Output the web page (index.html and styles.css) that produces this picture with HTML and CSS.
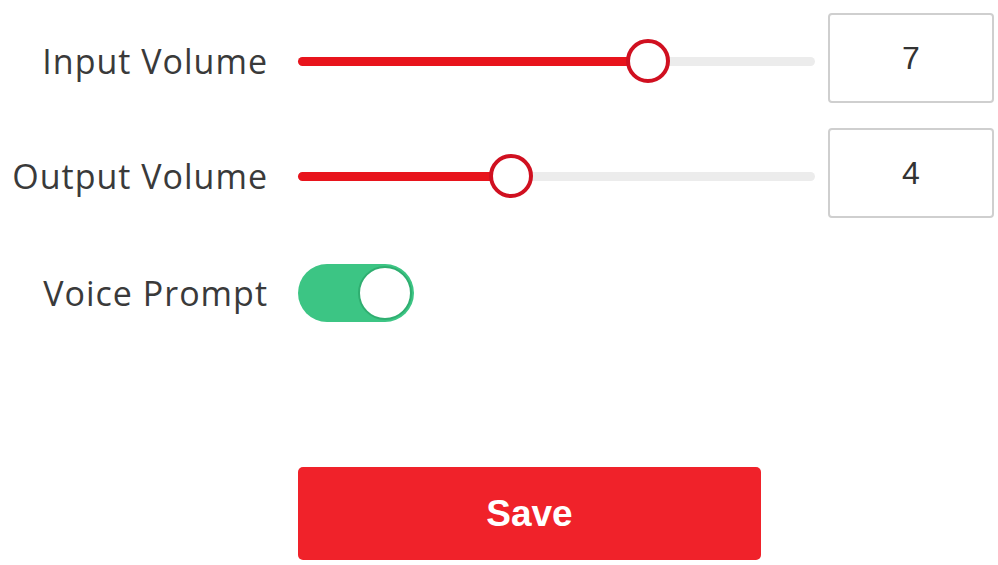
FILE: index.html
```html
<!DOCTYPE html>
<html lang="en">
<head>
  <meta charset="UTF-8" />
  <meta name="viewport" content="width=device-width, initial-scale=1.0"/>
  <title>Audio Settings</title>
  <link rel="stylesheet" href="styles.css">
</head>
<body>
  <main class="settings">
    <div class="row">
      <label class="label">Input Volume</label>
      <div class="slider">
        <div class="track">
          <div class="fill" style="width: 67.7%;"></div>
          <div class="thumb" style="left: 67.7%;"></div>
        </div>
      </div>
      <div class="value">7</div>
    </div>

    <div class="row">
      <label class="label">Output Volume</label>
      <div class="slider">
        <div class="track">
          <div class="fill" style="width: 41.2%;"></div>
          <div class="thumb" style="left: 41.2%;"></div>
        </div>
      </div>
      <div class="value">4</div>
    </div>

    <div class="row row-switch">
      <label class="label">Voice Prompt</label>
      <div class="switch on">
        <div class="knob"></div>
      </div>
    </div>

    <div class="actions">
      <button class="save-btn">Save</button>
    </div>
  </main>
</body>
</html>
```

FILE: styles.css
```css
* {
  margin: 0;
  padding: 0;
  box-sizing: border-box;
}
body {
  background: #fff;
  font-family: 'Open Sans', 'Noto Sans', sans-serif;
  color: #3a3a3a;
}
.settings {
  padding-top: 13px;
  display: flex;
  flex-direction: column;
  gap: 25px;
}
.row {
  display: grid;
  grid-template-columns: 268px 517px 166px;
  column-gap: 30px;
  align-items: center;
  height: 90px;
}
.row > :nth-child(3) {
  margin-left: -17px;
}
.row-switch {
  margin-top: 5px;
}
.label {
  text-align: right;
  font-size: 34px;
  letter-spacing: 1px;
  padding-top: 5px;
}
.row-switch .label {
  padding-top: 0;
}
.slider {
  padding-top: 6px;
}
.track {
  position: relative;
  height: 9px;
  border-radius: 5px;
  background: #ececec;
}
.fill {
  height: 100%;
  border-radius: 5px;
  background: #e8141c;
}
.thumb {
  position: absolute;
  top: 50%;
  width: 44px;
  height: 44px;
  border: 4px solid #d01020;
  border-radius: 50%;
  background: #fff;
  transform: translate(-50%, -50%);
}
.value {
  width: 166px;
  height: 90px;
  border: 2px solid #cfcfcf;
  border-radius: 4px;
  display: flex;
  align-items: center;
  justify-content: center;
  font-family: 'Liberation Sans', Arial, sans-serif;
  font-size: 32px;
  color: #333;
}
.switch {
  width: 116px;
  height: 58px;
  border-radius: 29px;
  background: #3cc584;
  display: flex;
  align-items: center;
  padding: 2px;
}
.switch.on {
  justify-content: flex-end;
}
.knob {
  width: 54px;
  height: 54px;
  border-radius: 50%;
  background: #fff;
  border: 2px solid #2fae70;
}
.actions {
  padding-left: 298px;
  margin-top: 104px;
}
.save-btn {
  width: 463px;
  height: 93px;
  border: none;
  border-radius: 5px;
  background: #f0222a;
  color: #fff;
  font-family: 'Liberation Sans', Arial, sans-serif;
  font-weight: bold;
  font-size: 37px;
  cursor: pointer;
}
```
